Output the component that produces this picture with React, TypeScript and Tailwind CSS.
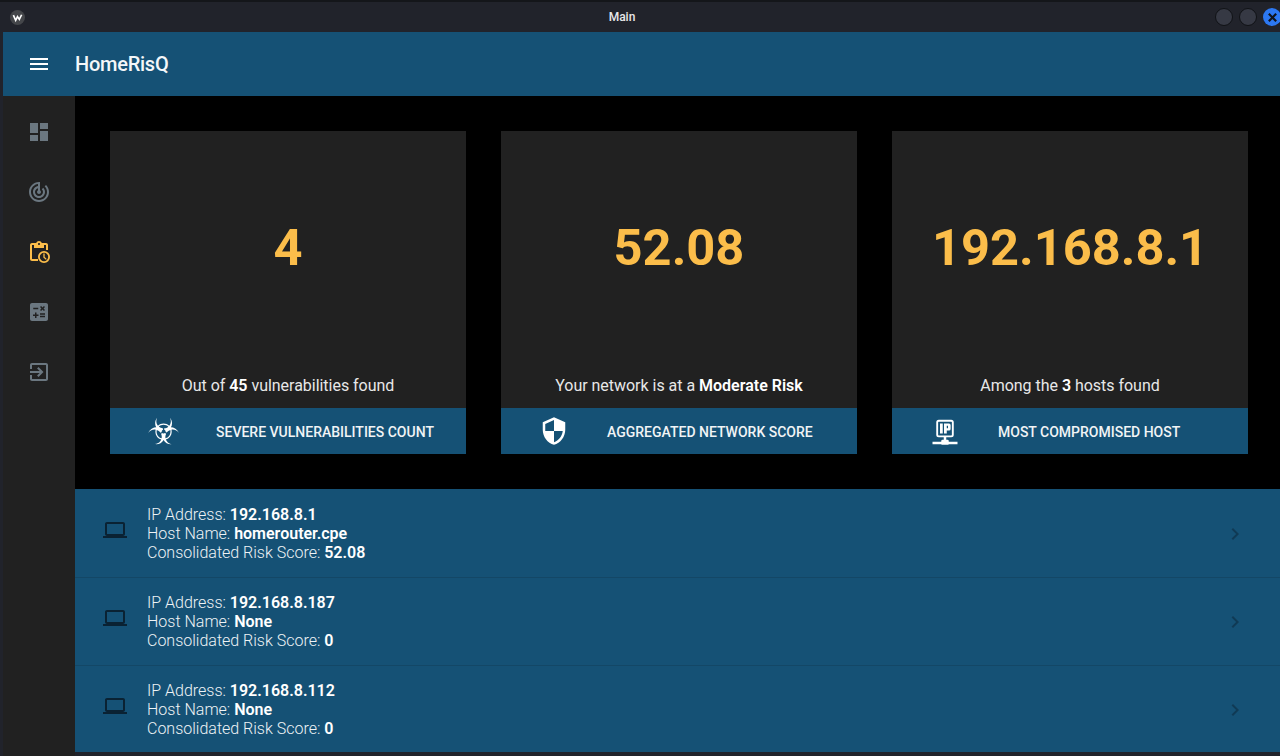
import { GiBiohazard } from 'react-icons/gi'

const Icon = ({ d, className }: { d: string; className: string }) => (
  <svg viewBox="0 0 24 24" fill="currentColor" className={className}>
    <path d={d} />
  </svg>
)

const laptop = 'M20 18c1.1 0 2-.9 2-2V6c0-1.1-.9-2-2-2H4c-1.1 0-2 .9-2 2v10c0 1.1.9 2 2 2H0v2h24v-2h-4zM4 6h16v10H4V6z'

const SideIcons = () => (
  <div className="w-[72px] shrink-0 bg-[#212121] flex flex-col items-center pt-6 gap-9 text-[#6b7780]">
    <Icon className="w-6 h-6" d="M3 13h8V3H3v10zm0 8h8v-6H3v6zm10 0h8V11h-8v10zm0-18v6h8V3h-8z" />
    <Icon className="w-6 h-6" d="M19.07 4.93l-1.41 1.41C19.1 7.79 20 9.79 20 12c0 4.42-3.58 8-8 8s-8-3.58-8-8c0-4.08 3.05-7.44 7-7.93v2.02C8.16 6.57 6 9.03 6 12c0 3.31 2.69 6 6 6s6-2.69 6-6c0-1.66-.67-3.16-1.76-4.24l-1.41 1.41C15.55 9.9 16 10.9 16 12c0 2.21-1.79 4-4 4s-4-1.79-4-4c0-1.86 1.28-3.41 3-3.86v2.14c-.6.35-1 .98-1 1.72 0 1.1.9 2 2 2s2-.9 2-2c0-.74-.4-1.38-1-1.72V2h-1C6.48 2 2 6.48 2 12s4.48 10 10 10 10-4.48 10-10c0-2.76-1.12-5.26-2.93-7.07z" />
    <svg viewBox="0 0 24 24" fill="none" className="w-6 h-6 text-[#fbbd4a]">
      <path fill="currentColor" d="M19 3h-4.18C14.4 1.84 13.3 1 12 1s-2.4.84-2.82 2H5c-1.1 0-2 .9-2 2v14c0 1.1.9 2 2 2h6v-2H5V5h2v3h10V5h2v5h2V5c0-1.1-.9-2-2-2zm-7 2c-.55 0-1-.45-1-1s.45-1 1-1 1 .45 1 1-.45 1-1 1z" />
      <circle cx="17" cy="17" r="5.1" stroke="currentColor" strokeWidth="1.8" />
      <path stroke="currentColor" strokeWidth="1.3" d="M17 13.6v3.6l2.3 2.2" />
    </svg>
    <Icon className="w-6 h-6" d="M19 3H5c-1.1 0-2 .9-2 2v14c0 1.1.9 2 2 2h14c1.1 0 2-.9 2-2V5c0-1.1-.9-2-2-2zm-5.97 4.06L14.09 6l1.41 1.41L16.91 6l1.06 1.06-1.41 1.41 1.41 1.41-1.06 1.06-1.41-1.4-1.41 1.41-1.06-1.06 1.41-1.41-1.41-1.42zm-6.78.66h5v1.5h-5v-1.5zM11.5 16h-2v2H8v-2H6v-1.5h2v-2h1.5v2h2V16zm6.5 1.25h-5v-1.5h5v1.5zm0-2.5h-5v-1.5h5v1.5z" />
    <Icon className="w-6 h-6" d="M10.09 15.59L11.5 17l5-5-5-5-1.41 1.41L12.67 11H3v2h9.67l-2.58 2.59zM19 3H5c-1.11 0-2 .9-2 2v4h2V5h14v14H5v-4H3v4c0 1.1.89 2 2 2h14c1.1 0 2-.9 2-2V5c0-1.1-.9-2-2-2z" />
  </div>
)

const Card = ({
  value,
  icon,
  label,
  children,
}: {
  value: string
  icon: React.ReactNode
  label: string
  children: React.ReactNode
}) => (
  <div className="w-[356px] h-[323px] bg-[#212121] flex flex-col">
    <div className="flex-1 flex flex-col items-center">
      <div className="mt-[85px] text-[50.6px] leading-[64px] font-bold text-[#fbbd4a]">{value}</div>
      <div className="mt-auto mb-[10px] text-[16px] leading-[24px] tracking-[-0.03px] text-[#e8e8e8]">{children}</div>
    </div>
    <div className="h-[46px] bg-[#155175] flex items-center text-white">
      <div className="w-[106px] flex justify-center">{icon}</div>
      <div className="pt-[2px] text-[14px] font-medium text-[#f1f4f6]">{label}</div>
    </div>
  </div>
)

const Host = ({ ip, name, score, last }: { ip: string; name: string; score: string; last?: boolean }) => (
  <div className={`h-[88px] flex items-center pl-7 pr-[33px] border-b ${last ? 'border-transparent' : 'border-[#134766]'}`}>
    <Icon className="w-6 h-6 text-[#0a2233] mr-5 mb-2" d={laptop} />
    <div className="flex-1 text-[16px] leading-[19px] font-light text-[#eef3f6]">
      <div>IP Address: <b className="font-semibold text-white">{ip}</b></div>
      <div>Host Name: <b className="font-semibold text-white">{name}</b></div>
      <div>Consolidated Risk Score: <b className="font-semibold text-white">{score}</b></div>
    </div>
    <Icon className="w-6 h-6 text-[#103a55]" d="M10 6L8.59 7.41 13.17 12l-4.58 4.59L10 18l6-6z" />
  </div>
)

export default function App() {
  return (
    <div className="w-[1280px] h-[756px] overflow-hidden bg-[#21232b] flex flex-col font-['Roboto',sans-serif]">
      <div className="h-[32px] shrink-0 border-t-2 border-[#14161a] flex items-center relative">
        <div className="ml-[10px] w-[15px] h-[15px] rounded-full bg-[#44464a] flex items-center justify-center">
          <svg viewBox="0 0 12 12" className="w-[11px] h-[11px] text-white" fill="none" stroke="currentColor" strokeWidth="1.8">
            <path d="M1.5 3.5L4 9l2-4 2 3 2.5-5" />
          </svg>
        </div>
        <div className="absolute left-0 right-[36px] text-center text-[12px] font-medium text-[#e8e8ea]">Main</div>
        <div className="ml-auto flex items-center gap-[6px] mr-[-1px]">
          <div className="w-[18px] h-[18px] rounded-full bg-[#363944] border border-[#101216]" />
          <div className="w-[18px] h-[18px] rounded-full bg-[#363944] border border-[#101216]" />
          <div className="w-[18px] h-[18px] rounded-full bg-[#2c78f2] flex items-center justify-center">
            <svg viewBox="0 0 12 12" className="w-[11px] h-[11px] text-[#10131a]" fill="none" stroke="currentColor" strokeWidth="2.4">
              <path d="M2 2l8 8M10 2l-8 8" />
            </svg>
          </div>
        </div>
      </div>
      <div className="flex-1 ml-[3px] flex flex-col min-h-0">
        <div className="h-[64px] shrink-0 bg-[#155175] flex items-center text-white">
          <Icon className="w-6 h-6 ml-6" d="M3 18h18v-2H3v2zm0-5h18v-2H3v2zm0-7v2h18V6H3z" />
          <div className="ml-6 text-[20px] font-medium tracking-[-0.25px] text-[#f4f7f9]">HomeRisQ</div>
        </div>
        <div className="flex-1 flex min-h-0">
          <SideIcons />
          <div className="flex-1 bg-black flex flex-col min-w-0">
            <div className="flex gap-[35px] pl-[35px] py-[35px]">
              <Card value="4" label="SEVERE VULNERABILITIES COUNT" icon={<GiBiohazard className="w-[33px] h-[33px]" />}>
                Out of <b className="font-semibold tracking-normal text-white">45</b> vulnerabilities found
              </Card>
              <Card
                value="52.08"
                label="AGGREGATED NETWORK SCORE"
                icon={<Icon className="w-[30px] h-[30px]" d="M12 1L3 5v6c0 5.55 3.84 10.74 9 12 5.16-1.26 9-6.45 9-12V5l-9-4zm0 10.99h7c-.53 4.12-3.28 7.79-7 8.94V12H5V6.3l7-3.11v8.8z" />}
              >
                Your network is at a <b className="font-semibold tracking-normal text-white">Moderate Risk</b>
              </Card>
              <Card
                value="192.168.8.1"
                label="MOST COMPROMISED HOST"
                icon={
                  <svg viewBox="0 0 24 24" fill="currentColor" fillRule="evenodd" className="w-[30px] h-[30px]">
                    <path d="M7 3h10a2 2 0 0 1 2 2v10a2 2 0 0 1-2 2h-4v2h1a1 1 0 0 1 1 1v.5h7v2h-7a1 1 0 0 1-1 .5h-4a1 1 0 0 1-1-.5H2v-2h7V20a1 1 0 0 1 1-1h1v-2H7a2 2 0 0 1-2-2V5a2 2 0 0 1 2-2zm0 1.5a.5.5 0 0 0-.5.5v10a.5.5 0 0 0 .5.5h10a.5.5 0 0 0 .5-.5V5a.5.5 0 0 0-.5-.5H7z" />
                    <path d="M8 6h2.2v8H8V6zm3.2 0h4a1.3 1.3 0 0 1 1.3 1.3v3a1.3 1.3 0 0 1-1.3 1.3h-1.8V14h-2.2V6zm2.2 1.8v2h1v-2h-1z" />
                  </svg>
                }
              >
                Among the <b className="font-semibold tracking-normal text-white">3</b> hosts found
              </Card>
            </div>
            <div className="flex-1 bg-[#155175] min-h-0 pt-px">
              <Host ip="192.168.8.1" name="homerouter.cpe" score="52.08" />
              <Host ip="192.168.8.187" name="None" score="0" />
              <Host ip="192.168.8.112" name="None" score="0" last />
            </div>
            <div className="h-[4px] shrink-0 bg-[#21232b]" />
          </div>
        </div>
      </div>
    </div>
  )
}
